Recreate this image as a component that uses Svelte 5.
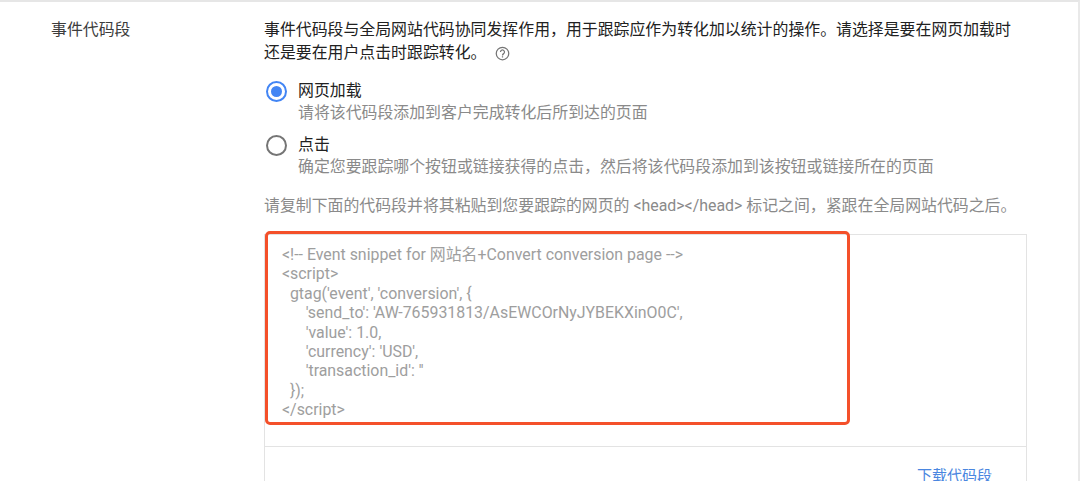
<script>
  const options = [
    { label: "网页加载", hint: "请将该代码段添加到客户完成转化后所到达的页面", checked: true },
    { label: "点击", hint: "确定您要跟踪哪个按钮或链接获得的点击，然后将该代码段添加到该按钮或链接所在的页面", checked: false }
  ];

  const snippet = `<!-- Event snippet for 网站名+Convert conversion page -->
<script>
  gtag('event', 'conversion', {
      'send_to': 'AW-765931813/AsEWCOrNyJYBEKXinO0C',
      'value': 1.0,
      'currency': 'USD',
      'transaction_id': ''
  });
</scr` + `ipt>`;
</script>

<div class="page">
  <div class="row">
    <div class="label">事件代码段</div>
    <div class="content">
      <p class="intro">
        事件代码段与全局网站代码协同发挥作用，用于跟踪应作为转化加以统计的操作。请选择是要在网页加载时<br>还是要在用户点击时跟踪转化。
        <svg class="help" viewBox="0 0 24 24" width="15" height="15">
          <circle cx="12" cy="12" r="10" fill="none" stroke="#757575" stroke-width="2"/>
          <path d="M8.8 9.6a3.2 3.2 0 1 1 5 2.6c-1.1.8-1.8 1.4-1.8 2.8" fill="none" stroke="#757575" stroke-width="2"/>
          <rect x="11" y="16.4" width="2" height="2" fill="#757575"/>
        </svg>
      </p>

      <div class="options">
        {#each options as opt}
          <div class="option">
            <span class="radio" class:checked={opt.checked}></span>
            <div>
              <div class="opt-label">{opt.label}</div>
              <div class="hint">{opt.hint}</div>
            </div>
          </div>
        {/each}
      </div>

      <p class="copy">请复制下面的代码段并将其粘贴到您要跟踪的网页的 &lt;head&gt;&lt;/head&gt; 标记之间，紧跟在全局网站代码之后。</p>

      <div class="box">
        <pre class="code">{snippet}</pre>
        <div class="highlight"></div>
        <div class="actions"><span class="download">下载代码段</span></div>
      </div>
    </div>
  </div>
</div>

<style>
  :global(body) {
    background: #fff;
    overflow: hidden;
  }
  .page {
    height: 481px;
    box-sizing: border-box;
    border-top: 2px solid #e6e6e6;
    border-right: 2px solid #e9e9e9;
    overflow: hidden;
    font-family: Roboto, "Noto Sans CJK SC", sans-serif;
    font-size: 15.9px;
    color: #212121;
  }
  .row {
    display: flex;
    padding: 16px 52px 0 51px;
  }
  .label {
    width: 213px;
    flex: none;
    line-height: 24px;
    color: #3c3c3c;
  }
  .content {
    flex: 1;
  }
  .intro {
    margin: 0;
    line-height: 23px;
    white-space: nowrap;
  }
  .help {
    vertical-align: -3px;
    margin-left: 5px;
  }
  .options {
    margin-top: 16px;
    margin-left: 2px;
  }
  .option {
    display: flex;
    gap: 11px;
    margin-bottom: 10px;
    line-height: 22px;
  }
  .radio {
    flex: none;
    box-sizing: border-box;
    width: 21px;
    height: 21px;
    margin-top: 1px;
    border: 2px solid #757575;
    border-radius: 50%;
    position: relative;
  }
  .radio.checked {
    border-color: #4285f4;
  }
  .radio.checked::after {
    content: "";
    position: absolute;
    inset: 3px;
    border-radius: 50%;
    background: #4285f4;
  }
  .hint {
    color: #8a8a8a;
  }
  .copy {
    margin: 16px 0 0;
    line-height: 24px;
    color: #8a8a8a;
    white-space: nowrap;
  }
  .box {
    position: relative;
    margin-top: 16px;
    border: 1px solid #e3e3e3;
    width: 761px;
  }
  .code {
    margin: 0;
    height: 212px;
    box-sizing: border-box;
    padding: 10px 17px 0;
    font: 15.9px/19.4px Roboto, "Noto Sans CJK SC", sans-serif;
    color: #9e9e9e;
    border-bottom: 1px solid #e3e3e3;
  }
  .highlight {
    position: absolute;
    left: 0;
    top: -4px;
    width: 585px;
    height: 194px;
    box-sizing: border-box;
    border: 3px solid #f4502a;
    border-radius: 5px;
  }
  .actions {
    display: flex;
    justify-content: flex-end;
    padding: 17px 34px 30px;
  }
  .download {
    font-size: 15px;
    color: #4a86e0;
  }
</style>
